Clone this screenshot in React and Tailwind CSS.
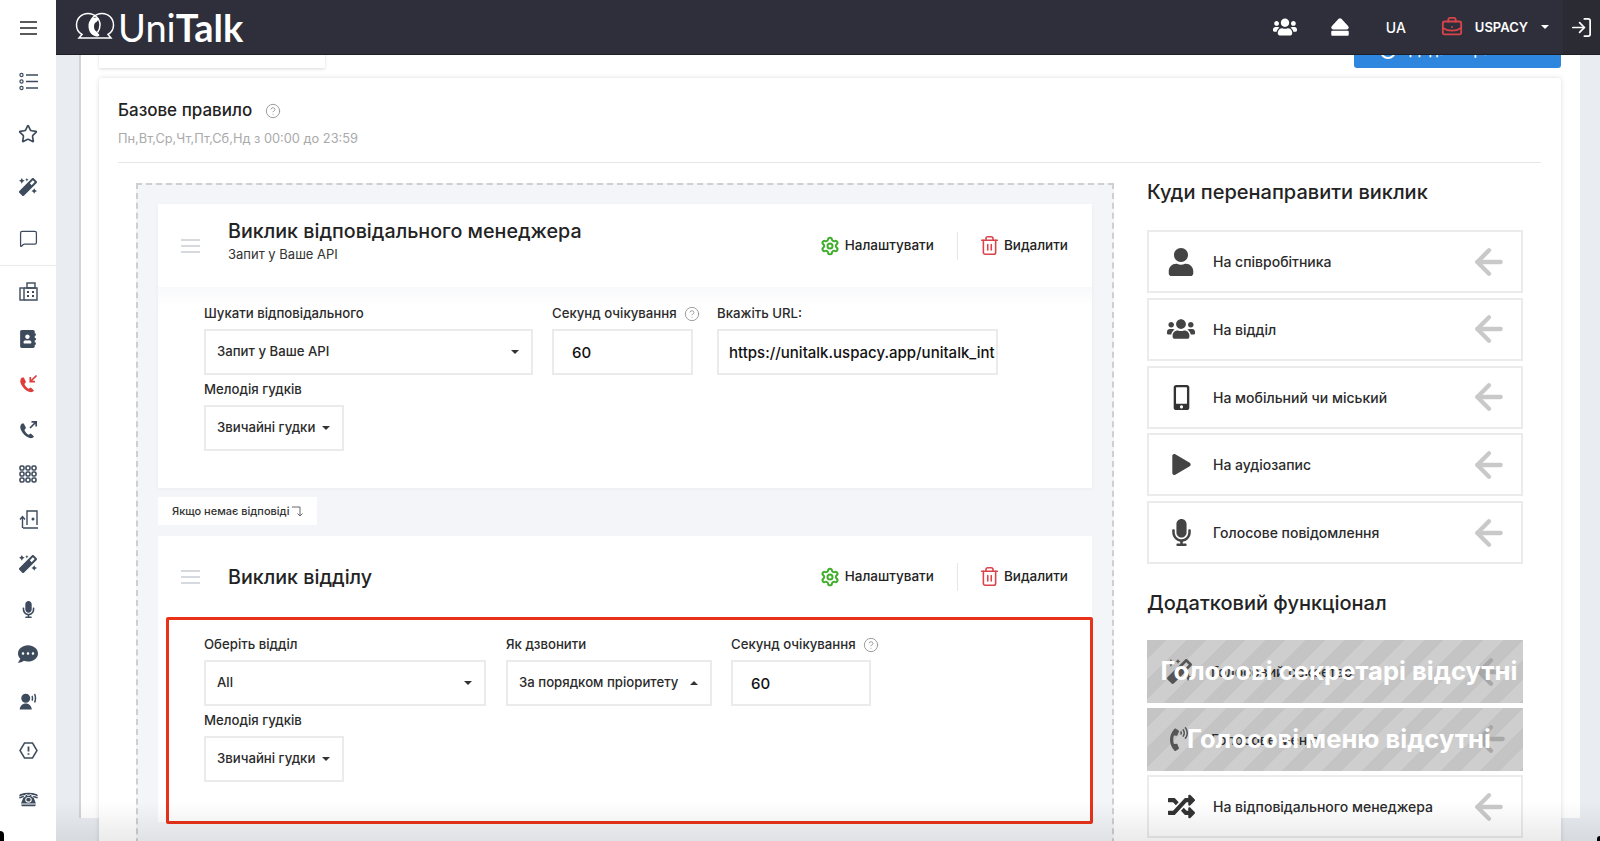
import React from "react";
import { ArrowLeft, BriefcaseBusiness, CircleHelp, LogIn, MessageSquare, Settings, Star, Trash2 } from "lucide-react";
import { FaAddressBook, FaCommentDots, FaEject, FaMagic, FaMicrophone, FaMobileAlt, FaPhoneVolume, FaPlay, FaRandom, FaUser, FaUsers } from "react-icons/fa";
import { GiRotaryPhone } from "react-icons/gi";
import { RiUserVoiceFill } from "react-icons/ri";

function ListIcon() {
    return (
        <svg width="19" height="19" viewBox="0 0 19 19" fill="none" stroke="#3d4b5c">
            <circle cx="2.5" cy="3" r="1.6" strokeWidth="1.2" />
            <circle cx="2.5" cy="9.5" r="1.6" strokeWidth="1.2" />
            <circle cx="2.5" cy="16" r="1.6" strokeWidth="1.2" />
            <path d="M7 3h12M7 9.5h12M7 16h12" strokeWidth="1.5" />
        </svg>
    );
}

function FaxIcon() {
    return (
        <svg width="19" height="19" viewBox="0 0 19 19" fill="none" stroke="#3d4b5c" strokeWidth="1.4">
            <rect x="1" y="6" width="4" height="12" />
            <path d="M5 6h13v12H5" />
            <rect x="8" y="1" width="8" height="5" />
            <path d="M8 9h2v2H8zM13 9h2v2h-2zM8 13h2v2H8zM13 13h2v2h-2z" fill="#3d4b5c" stroke="none" />
        </svg>
    );
}

function GridIcon() {
    const cells = [2, 8, 14];
    return (
        <svg width="19" height="19" viewBox="0 0 19 19" fill="none" stroke="#3d4b5c" strokeWidth="1.6">
            {cells.map((y) => cells.map((x) => <rect key={`${x}-${y}`} x={x - 1} y={y - 1} width="4" height="4" rx="1.4" />))}
        </svg>
    );
}

function DoorIcon() {
    return (
        <svg width="19" height="19" viewBox="0 0 19 19" fill="none" stroke="#3d4b5c" strokeWidth="1.4">
            <path d="M8 15V1h10v14" />
            <path d="M4 18h15M3.500 18V7M1 9.500l2.500-3 2.500 3" />
            <circle cx="14" cy="9" r="0.8" fill="#3d4b5c" />
        </svg>
    );
}

function HexIcon() {
    return (
        <svg width="19" height="17" viewBox="0 0 19 17" fill="none" stroke="#3d4b5c" strokeWidth="1.5">
            <path d="M5.500 1h8l4.500 7.500-4.500 7.500h-8L1 8.500z" />
            <path d="M9.500 4.500v5M9.500 11.200v1.500" strokeWidth="1.8" />
        </svg>
    );
}

function CallIcon({ color, out }) {
    return (
        <svg width="20" height="20" viewBox="0 0 20 20" fill="none">
            <path d="M4 3.500C2 5 1.800 7.500 3 10c1.600 3.500 4.500 6.500 8 7.800 2 .7 4 .3 5-1.300l-3.200-3-2.200 1.200c-1.800-1-3.400-2.800-4.200-4.800L8 8 5.800 3.500z" fill={color} />
            {out ? (
                <path d="M12 8l6-6M13.500 1.800H18.200V6.500" stroke={color} strokeWidth="1.7" />
            ) : (
                <path d="M18.500 1.500l-6 6M12.300 3v4.700H17" stroke={color} strokeWidth="1.7" />
            )}
        </svg>
    );
}

function Logo() {
    return (
        <div className="flex items-center ml-[19px]">
            <svg width="40" height="31" viewBox="0 0 40 31" fill="none" stroke="white" strokeWidth="1.5">
                <path d="M12 26H4l3-3.500C3.500 20.500 1.500 17 1.500 13 1.500 6.500 6.500 1.500 13 1.500c6.500 0 12 5 12 11.500 0 3-1 5.500-2.500 7.500" />
                <path d="M28 26h8l-3-3.500c3.500-2 5.500-5.500 5.500-9.500C38.500 6.500 33.500 1.500 27 1.500c-6.500 0-12 5-12 11.500 0 3 1 5.500 2.500 7.500" />
                <path d="M12 26h16" />
                <path d="M20.500 5.500c-4.500.5-7 4-7 8.500 0 5.500 3 9.500 8 10.500 1.500 0 2.500-.5 3-1.500l-3-3.500c-1.500-.5-2.500-2.500-2.500-5s1-4 2.500-4.500l2.500-3c-.5-1-2-1.500-3.500-1.500z" fill="white" stroke="none" />
            </svg>
            <span className="font-['Lato',sans-serif] text-[38px] leading-none text-white font-normal ml-[3px]">
                Uni<span className="font-bold">Talk</span>
            </span>
        </div>
    );
}

const topIcons = [
    { y: "h-[55px]", el: <div className="flex flex-col gap-[4px]"><div className="w-[17px] h-[2px] bg-[#5a5a5a]" /><div className="w-[17px] h-[2px] bg-[#5a5a5a]" /><div className="w-[17px] h-[2px] bg-[#5a5a5a]" /></div> },
    { y: "h-[52px]", el: <ListIcon /> },
    { y: "h-[54px]", el: <Star size={20} color="#3d4b5c" strokeWidth={2} /> },
    { y: "h-[51px]", el: <FaMagic size={18} color="#3d4b5c" /> },
    { y: "h-[52px]", el: <MessageSquare size={19} color="#3d4b5c" strokeWidth={1.6} /> },
];

const bottomIcons = [
    { y: "h-[50px]", el: <FaxIcon /> },
    { y: "h-[46px]", el: <FaAddressBook size={18} color="#3d4b5c" /> },
    { y: "h-[44px]", el: <CallIcon color="#e03c3c" /> },
    { y: "h-[48px]", el: <CallIcon color="#3d4b5c" out /> },
    { y: "h-[40px]", el: <GridIcon /> },
    { y: "h-[50px]", el: <DoorIcon /> },
    { y: "h-[40px]", el: <FaMagic size={18} color="#3d4b5c" /> },
    { y: "h-[50px]", el: <FaMicrophone size={17} color="#3d4b5c" /> },
    { y: "h-[40px]", el: <FaCommentDots size={20} color="#3d4b5c" /> },
    { y: "h-[56px]", el: <RiUserVoiceFill size={18} color="#3d4b5c" /> },
    { y: "h-[40px]", el: <HexIcon /> },
    { y: "h-[58px]", el: <GiRotaryPhone size={21} color="#3d4b5c" /> },
];

function Sidebar() {
    return (
        <aside className="w-14 shrink-0 bg-white flex flex-col items-stretch">
            <div className="border-b border-[#ececec] h-[266px] flex flex-col">
                {topIcons.map((item, i) => (
                    <div key={i} className={`${item.y} flex items-center justify-center`}>{item.el}</div>
                ))}
            </div>
            <div className="flex flex-col">
                {bottomIcons.map((item, i) => (
                    <div key={i} className={`${item.y} shrink-0 flex items-center justify-center`}>{item.el}</div>
                ))}
            </div>
        </aside>
    );
}

function Header() {
    return (
        <header className="h-[55px] shrink-0 bg-[#2e2f3a] flex items-center border-b border-[#1e1f26]">
            <Logo />
            <div className="ml-auto flex items-center text-white">
                <FaUsers size={24} />
                <FaEject size={20} className="ml-[33px]" />
                <span className="ml-[36px] text-[14px] font-medium">UA</span>
                <BriefcaseBusiness size={22} color="#d9434a" strokeWidth={2} className="ml-[35px]" />
                <span className="ml-[12px] mt-[2px] text-[13px] font-semibold">USPACY</span>
                <span className="ml-[13px] w-0 h-0 border-x-[4px] border-x-transparent border-t-[4px] border-t-white" />
                <div className="ml-[14px] w-[37px] h-[54px] bg-[#2a2b33] flex items-center justify-center">
                    <LogIn size={23} strokeWidth={1.8} />
                </div>
            </div>
        </header>
    );
}

function Caret({ up }) {
    return up ? (
        <span className="w-0 h-0 border-x-[4px] border-x-transparent border-b-[4px] border-b-[#333]" />
    ) : (
        <span className="w-0 h-0 border-x-[4px] border-x-transparent border-t-[4px] border-t-[#333]" />
    );
}

function Field({ label, help, width, children }) {
    return (
        <div className={`${width} shrink-0`}>
            <div className="h-[18px] mb-[6px] flex items-center text-[13.200px] font-medium text-[#2b2b2b] whitespace-nowrap">
                {label}
                {help && <CircleHelp size={16} color="#8f8f8f" strokeWidth={1.3} className="ml-[7px] shrink-0" />}
            </div>
            {children}
        </div>
    );
}

function Select({ value, up }) {
    return (
        <div className="h-[46px] border-2 border-[#ebebeb] bg-white pl-[11px] pr-[12px] flex items-center justify-between text-[13.200px] font-medium text-[#2b2b2b] whitespace-nowrap">
            {value}
            <Caret up={up} />
        </div>
    );
}

function Input({ value, padding }) {
    return (
        <input
            readOnly
            value={value}
            className={`block w-full h-[46px] border-2 border-[#ebebeb] bg-white ${padding} pr-[1px] text-[15px] font-medium text-[#111] outline-none`}
        />
    );
}

function CardHead({ title, sub, height }) {
    return (
        <div className={`${height} bg-white flex items-center pl-[23px] pr-[24px]`}>
            <div className="w-[19px] flex flex-col gap-[4px]">
                <div className="h-[2px] bg-[#d6d9dd]" />
                <div className="h-[2px] bg-[#d6d9dd]" />
                <div className="h-[2px] bg-[#d6d9dd]" />
            </div>
            <div className={`ml-[28px] ${sub ? "mb-[10px]" : ""}`}>
                <div className="text-[19.700px] font-medium leading-[26px] text-[#232323]">{title}</div>
                {sub && <div className="text-[13px] leading-[18px] mt-[1px] text-[#333]">{sub}</div>}
            </div>
            <div className="ml-auto flex items-center text-[13.500px] font-medium text-[#232323]">
                <Settings size={20} color="#3fae2a" strokeWidth={2.4} />
                <span className="ml-[5px]">Налаштувати</span>
                <div className="w-px h-[28px] bg-[#e6e6e6] ml-[23px] mr-[21px]" />
                <Trash2 size={21} color="#d9434a" strokeWidth={1.8} />
                <span className="ml-[4px]">Видалити</span>
            </div>
        </div>
    );
}

function Melody() {
    return (
        <div className="mt-[6px]">
            <Field label="Мелодія гудків" width="w-[140px]">
                <Select value="Звичайні гудки" />
            </Field>
        </div>
    );
}

const targets = [
    { label: "На співробітника", icon: <FaUser size={28} color="#444" /> },
    { label: "На відділ", icon: <FaUsers size={28} color="#444" /> },
    { label: "На мобільний чи міський", icon: <FaMobileAlt size={25} color="#333" /> },
    { label: "На аудіозапис", icon: <FaPlay size={21} color="#444" /> },
    { label: "Голосове повідомлення", icon: <FaMicrophone size={27} color="#444" /> },
];

function TargetRow({ label, icon, off, note }) {
    return (
        <div className={`relative h-[63px] flex items-center ${off ? "bg-[repeating-linear-gradient(135deg,#c4c4c4_0,#c4c4c4_14px,#cecece_14px,#cecece_28px)]" : "border-2 border-[#ebebeb] bg-white"}`}>
            <div className="w-[64px] shrink-0 flex justify-center">{icon}</div>
            <span className="text-[14px] font-medium text-[#2b2b2b]">{label}</span>
            <ArrowLeft size={40} color={off ? "#a8a8a8" : "#c9c9c9"} strokeWidth={2.6} className="ml-auto mr-[12px]" />
            {off && (
                <div className="absolute inset-0 pl-[8px] flex items-center justify-center text-[25.600px] font-bold text-white whitespace-nowrap">
                    {note}
                </div>
            )}
        </div>
    );
}

function RightColumn() {
    return (
        <div className="w-[376px] shrink-0">
            <h2 className="text-[20px] font-medium leading-[24px] mt-[-3px] text-[#232323]">Куди перенаправити виклик</h2>
            <div className="mt-[26px] flex flex-col gap-[4.750px]">
                {targets.map((t) => (
                    <TargetRow key={t.label} label={t.label} icon={t.icon} />
                ))}
            </div>
            <h2 className="text-[20px] font-medium leading-[24px] mt-[27px] text-[#232323]">Додатковий функціонал</h2>
            <div className="mt-[25px] flex flex-col gap-[4.500px]">
                <TargetRow label="Голосовий секретар" icon={<FaMagic size={25} color="#555" />} off note="Голосові секретарі відсутні" />
                <TargetRow label="Голосове меню" icon={<FaPhoneVolume size={24} color="#555" />} off note="Голосові меню відсутні" />
                <TargetRow label="На відповідального менеджера" icon={<FaRandom size={27} color="#333" />} />
            </div>
        </div>
    );
}

function RuleBoard() {
    return (
        <div className="w-[978px] shrink-0 border-2 border-dashed border-[#cfcfcf] bg-[#f4f5f8] px-[20px] pt-[19px] pb-10">
            <div className="shadow-[0_1px_4px_rgba(0,0,0,0.04)]">
                <CardHead title="Виклик відповідального менеджера" sub="Запит у Ваше API" height="h-[83px]" />
                <div className="bg-gradient-to-b from-[#f8f9fa] to-white to-[20px] px-[46px] pt-[18px] pb-[37px]">
                    <div className="flex">
                        <Field label="Шукати відповідального" width="w-[329px]">
                            <Select value="Запит у Ваше API" />
                        </Field>
                        <Field label="Секунд очікування" help width="w-[141px] ml-[19px]">
                            <Input value="60" padding="pl-[18px]" />
                        </Field>
                        <Field label="Вкажіть URL:" width="w-[281px] ml-[24px]">
                            <Input value="https://unitalk.uspacy.app/unitalk_integration" padding="pl-[10px]" />
                        </Field>
                    </div>
                    <Melody />
                </div>
            </div>
            <div className="mt-[9px] h-[28px] w-[159px] bg-white flex items-center pl-[14px] text-[11px] font-medium text-[#333] whitespace-nowrap">
                Якщо немає відповіді
                <svg width="13" height="11" viewBox="0 0 13 11" fill="none" stroke="#666" className="ml-[3px]">
                    <path d="M0 1h8v9M5.500 7.500L8 10l2.500-2.500" />
                </svg>
            </div>
            <div className="relative mt-[11px]">
                <CardHead title="Виклик відділу" height="h-[81px]" />
                <div className="bg-white px-[46px] pt-[19px] pb-[40px]">
                    <div className="flex">
                        <Field label="Оберіть відділ" width="w-[282px]">
                            <Select value="All" />
                        </Field>
                        <Field label="Як дзвонити" width="w-[206px] ml-[20px]">
                            <Select value="За порядком пріоритету" up />
                        </Field>
                        <Field label="Секунд очікування" help width="w-[140px] ml-[19px]">
                            <Input value="60" padding="pl-[18px]" />
                        </Field>
                    </div>
                    <Melody />
                </div>
                {/* red highlight drawn over the card */}
                <div className="absolute left-[8px] right-[-1px] top-[81px] h-[207px] border-[3px] border-[#e8321a] rounded-[2px]" />
            </div>
        </div>
    );
}

export default function App() {
    return (
        <div className="relative h-screen w-full overflow-hidden flex bg-white font-['Inter','Noto_Sans',sans-serif]">
            <Sidebar />
            <div className="relative flex-1 min-w-0 flex flex-col">
                <Header />
                <div className="flex-1 min-h-0 overflow-hidden bg-[#e9edf1] pl-[23px] pr-[20px]">
                    <div className="h-full bg-white border-l-2 border-[#cfd4d9] pl-[18px] pr-[19px]">
                        <div className="h-[36px] mt-[-23px] flex justify-between">
                            <div className="w-[226px] bg-white shadow-[0_1px_3px_rgba(0,0,0,0.15)]" />
                            <div className="w-[207px] bg-[#2e86de] rounded-b-[3px] flex items-center pl-[26px] gap-[13px] text-white text-[14px] font-medium">
                                <span className="w-[16px] h-[16px] mt-[2px] rounded-full border-2 border-white shrink-0" />
                                <span className="mb-[2px] whitespace-nowrap">Додати правило</span>
                            </div>
                        </div>
                        <div className="mt-[10px] bg-white rounded-[3px] shadow-[0_0_5px_rgba(0,0,0,0.14)] pl-[19px] pr-[20px] pt-[22px] h-[800px]">
                            <div className="flex items-center h-[22px]">
                                <span className="text-[17px] font-medium text-[#232323]">Базове правило</span>
                                <CircleHelp size={16} color="#8f8f8f" strokeWidth={1.3} className="ml-[13px]" />
                            </div>
                            <div className="mt-[7px] text-[12.800px] leading-[20px] text-[#aaaaaa]">
                                Пн,Вт,Ср,Чт,Пт,Сб,Нд з 00:00 до 23:59
                            </div>
                            <div className="mt-[13px] border-t border-[#e6e6e6]" />
                            <div className="mt-[20px] ml-[18px] flex">
                                <RuleBoard />
                                <div className="ml-[33px]">
                                    <RightColumn />
                                </div>
                            </div>
                        </div>
                    </div>
                </div>
                {/* soft fade the recording leaves along the bottom edge */}
                <div className="absolute inset-x-0 bottom-0 h-[40px] bg-gradient-to-b from-transparent to-black/[0.08] pointer-events-none" />
            </div>
            {/* rounded window corners of the recording */}
            <div className="absolute left-0 bottom-0 w-[4px] h-[10px] bg-black rounded-tr-full" />
            <div className="absolute right-0 bottom-0 w-[3px] h-[5px] bg-black rounded-tl-full" />
        </div>
    );
}
